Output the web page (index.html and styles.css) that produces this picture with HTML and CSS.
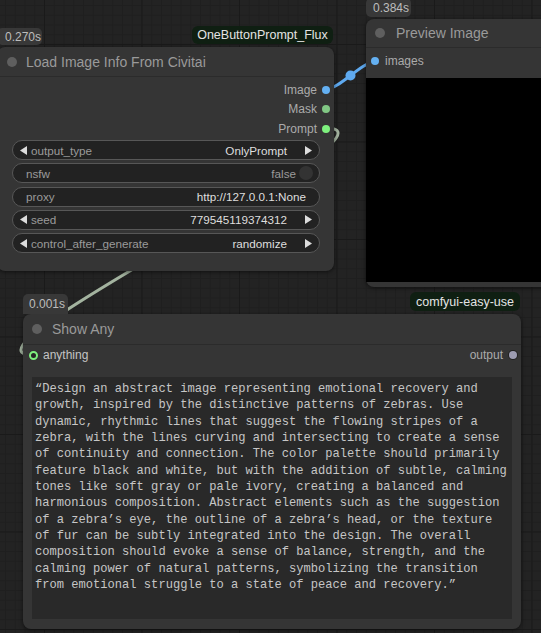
FILE: index.html
```html
<!DOCTYPE html>
<html>
<head>
<meta charset="utf-8">
<link rel="stylesheet" href="styles.css">
</head>
<body>
<div class="canvas">
  <svg class="links" width="541" height="633" viewBox="0 0 541 633">
    <path d="M326,128 C419,128 -60,355 33,355" stroke="#a3b39f" stroke-width="3" fill="none"/>
    <path d="M326,89 C340,89 361,62 375,62" stroke="#5ea9ef" stroke-width="3" fill="none"/>
    <circle cx="350.5" cy="75.5" r="5" fill="#5ea9ef"/>
  </svg>

  <div class="badge-time badge-load">0.270s</div>
  <div class="badge-src badge-obp">OneButtonPrompt_Flux</div>
  <div class="node node-load">
    <div class="node-title"><span class="title-dot"></span>Load Image Info From Civitai</div>
    <div class="slots-out">
      <div class="slot">Image<span class="dot dot-image"></span></div>
      <div class="slot">Mask<span class="dot dot-mask"></span></div>
      <div class="slot">Prompt<span class="dot dot-prompt"></span></div>
    </div>
    <div class="widgets">
      <div class="widget">
        <svg class="arrow" width="7" height="9" viewBox="0 0 7 9"><polygon points="7,0 7,9 0,4.5"/></svg>
        <span class="label">output_type</span><span class="val">OnlyPrompt</span>
        <svg class="arrow arrow-r" width="7" height="9" viewBox="0 0 7 9"><polygon points="0,0 0,9 7,4.5"/></svg>
      </div>
      <div class="widget widget-plain widget-toggle">
        <span class="label">nsfw</span><span class="val val-dim">false</span><span class="knob"></span>
      </div>
      <div class="widget widget-plain">
        <span class="label">proxy</span><span class="val">http://127.0.0.1:None</span>
      </div>
      <div class="widget">
        <svg class="arrow" width="7" height="9" viewBox="0 0 7 9"><polygon points="7,0 7,9 0,4.5"/></svg>
        <span class="label">seed</span><span class="val">779545119374312</span>
        <svg class="arrow arrow-r" width="7" height="9" viewBox="0 0 7 9"><polygon points="0,0 0,9 7,4.5"/></svg>
      </div>
      <div class="widget">
        <svg class="arrow" width="7" height="9" viewBox="0 0 7 9"><polygon points="7,0 7,9 0,4.5"/></svg>
        <span class="label">control_after_generate</span><span class="val">randomize</span>
        <svg class="arrow arrow-r" width="7" height="9" viewBox="0 0 7 9"><polygon points="0,0 0,9 7,4.5"/></svg>
      </div>
    </div>
  </div>

  <div class="badge-time badge-preview">0.384s</div>
  <div class="node node-preview">
    <div class="node-title title-preview"><span class="title-dot"></span>Preview Image</div>
    <div class="slot-in-row"><span class="dot dot-image"></span>images</div>
    <div class="preview-area"></div>
  </div>

  <div class="badge-time badge-show">0.001s</div>
  <div class="badge-src badge-easy">comfyui-easy-use</div>
  <div class="node node-show">
    <div class="node-title"><span class="title-dot"></span>Show Any</div>
    <div class="io-row">
      <span class="dot dot-ring"></span><span class="in-label">anything</span>
      <span class="out-label">output</span><span class="dot dot-any"></span>
    </div>
    <div class="textbox">“Design an abstract image representing emotional recovery and growth, inspired by the distinctive patterns of zebras. Use dynamic, rhythmic lines that suggest the flowing stripes of a zebra, with the lines curving and intersecting to create a sense of continuity and connection. The color palette should primarily feature black and white, but with the addition of subtle, calming tones like soft gray or pale ivory, creating a balanced and harmonious composition. Abstract elements such as the suggestion of a zebra’s eye, the outline of a zebra’s head, or the texture of fur can be subtly integrated into the design. The overall composition should evoke a sense of balance, strength, and the calming power of natural patterns, symbolizing the transition from emotional struggle to a state of peace and recovery.”</div>
  </div>
</div>
</body>
</html>
```
FILE: styles.css
```css
* { box-sizing: border-box; }

body {
  margin: 0;
  background: #222;
  font-family: "Liberation Sans", Arial, sans-serif;
}

.canvas {
  position: relative;
  width: 541px;
  height: 633px;
  overflow: hidden;
  background-color: #232323;
  background-image:
    linear-gradient(90deg, #1a1a1a 1px, transparent 1px),
    linear-gradient(#1a1a1a 1px, transparent 1px),
    linear-gradient(90deg, #1f1f1f 1px, transparent 1px),
    linear-gradient(#1f1f1f 1px, transparent 1px);
  background-size: 97.5px 97.5px, 97.5px 97.5px, 9.75px 9.75px, 9.75px 9.75px;
  background-position: 44px 44px, 44px 44px, 5px 5px, 5px 5px;
}

.links {
  position: absolute;
  left: 0;
  top: 0;
  z-index: 0;
}

.node {
  position: absolute;
  z-index: 1;
  background: #353535;
  border-radius: 8px;
  box-shadow: 0 1px 4px rgba(0, 0, 0, 0.55);
  display: flex;
  flex-direction: column;
}

.node-title {
  flex: none;
  height: 30px;
  display: flex;
  align-items: center;
  gap: 10px;
  padding-left: 9px;
  font-size: 14px;
  color: #9a9a9a;
  border-bottom: 1px solid #2b2b2b;
}

.title-dot {
  width: 10px;
  height: 10px;
  border-radius: 50%;
  background: #5f5f5f;
}

.dot {
  flex: none;
  width: 8px;
  height: 8px;
  border-radius: 50%;
}

.dot-image { background: #64b0f2; }
.dot-mask { background: #81c784; }
.dot-prompt { background: #7ef07e; }
.dot-ring {
  width: 9px;
  height: 9px;
  border: 2px solid #7ef07e;
  background: #262626;
}
.dot-any {
  background: #9d9cb2;
  box-shadow: 0 0 0 1px #222;
}

/* Load Image Info node */
.node-load {
  left: -3px;
  top: 47px;
  width: 337px;
  height: 224px;
}

.node-load .node-title {
  padding-left: 10px;
  gap: 9px;
}

.slots-out {
  display: flex;
  flex-direction: column;
  align-items: flex-end;
  padding: 3px 4px 0 0;
}

.slot {
  height: 19.5px;
  display: flex;
  align-items: center;
  gap: 5px;
  font-size: 12px;
  color: #ababab;
}

.widgets {
  display: flex;
  flex-direction: column;
  gap: 3.33px;
  padding: 1.5px 14px 0 15px;
}

.widget {
  height: 20px;
  display: flex;
  align-items: center;
  padding: 0 7px;
  border: 1px solid #575757;
  border-radius: 10px;
  background: #222;
  font-size: 11.7px;
  color: #9a9a9a;
  white-space: nowrap;
}

.arrow {
  flex: none;
  fill: #dcdcdc;
  margin-right: 4px;
}

.arrow-r {
  margin-right: 0;
  margin-left: 18px;
}

.val {
  margin-left: auto;
  color: #dedede;
}

.val-dim {
  color: #9a9a9a;
}

.widget-plain {
  padding: 0 13px 0 13px;
}

.widget-toggle {
  padding-right: 6px;
}

.knob {
  flex: none;
  width: 14px;
  height: 14px;
  border-radius: 50%;
  background: #333;
  margin-left: 3px;
}

/* Preview node */
.node-preview {
  left: 366px;
  top: 19px;
  width: 200px;
  height: 268px;
}

.title-preview {
  height: 29px;
  gap: 11px;
}

.slot-in-row {
  flex: none;
  height: 26px;
  display: flex;
  align-items: center;
  gap: 6px;
  padding-left: 5px;
  font-size: 12px;
  color: #ababab;
}

.preview-area {
  height: 204px;
  margin-top: 4px;
  background: #000;
}

/* Show Any node */
.node-show {
  left: 23px;
  top: 314px;
  width: 498px;
  height: 315px;
}

.node-show .node-title {
  height: 31px;
}

.io-row {
  flex: none;
  height: 20px;
  display: flex;
  align-items: center;
  padding: 0 4px 0 6px;
  font-size: 12px;
}

.in-label {
  margin-left: 5px;
  color: #c4c4c4;
}

.out-label {
  margin-left: auto;
  margin-right: 6px;
  color: #ababab;
}

.textbox {
  flex: 1;
  margin: 12px 9px 10px 9px;
  padding: 4px 3px 2px 3px;
  background: #292929;
  color: #c6c6c6;
  font-family: "Liberation Mono", "Courier New", monospace;
  font-size: 12.1px;
  line-height: 16.33px;
}

/* Badges */
.badge-time {
  position: absolute;
  z-index: 2;
  background: #383838;
  color: #bdbdbd;
  font-size: 12px;
  border-radius: 5px;
  display: flex;
  align-items: center;
  width: 45px;
}

.badge-load {
  left: -3px;
  top: 28px;
  height: 17px;
  padding-left: 8px;
}

.badge-preview {
  left: 366px;
  top: -2px;
  height: 19px;
  padding-left: 7px;
  padding-top: 1px;
}

.badge-show {
  left: 23px;
  top: 294px;
  height: 20px;
  padding-left: 6px;
  border-radius: 5px 5px 0 0;
}

.badge-src {
  position: absolute;
  z-index: 2;
  background: #0f1f12;
  color: #e4e4e4;
  font-size: 12.5px;
  border-radius: 6px;
  display: flex;
  align-items: center;
  justify-content: center;
}

.badge-obp {
  left: 192px;
  top: 26px;
  width: 141px;
  height: 18px;
}

.badge-easy {
  left: 410px;
  top: 292px;
  width: 110px;
  height: 19px;
}
```
